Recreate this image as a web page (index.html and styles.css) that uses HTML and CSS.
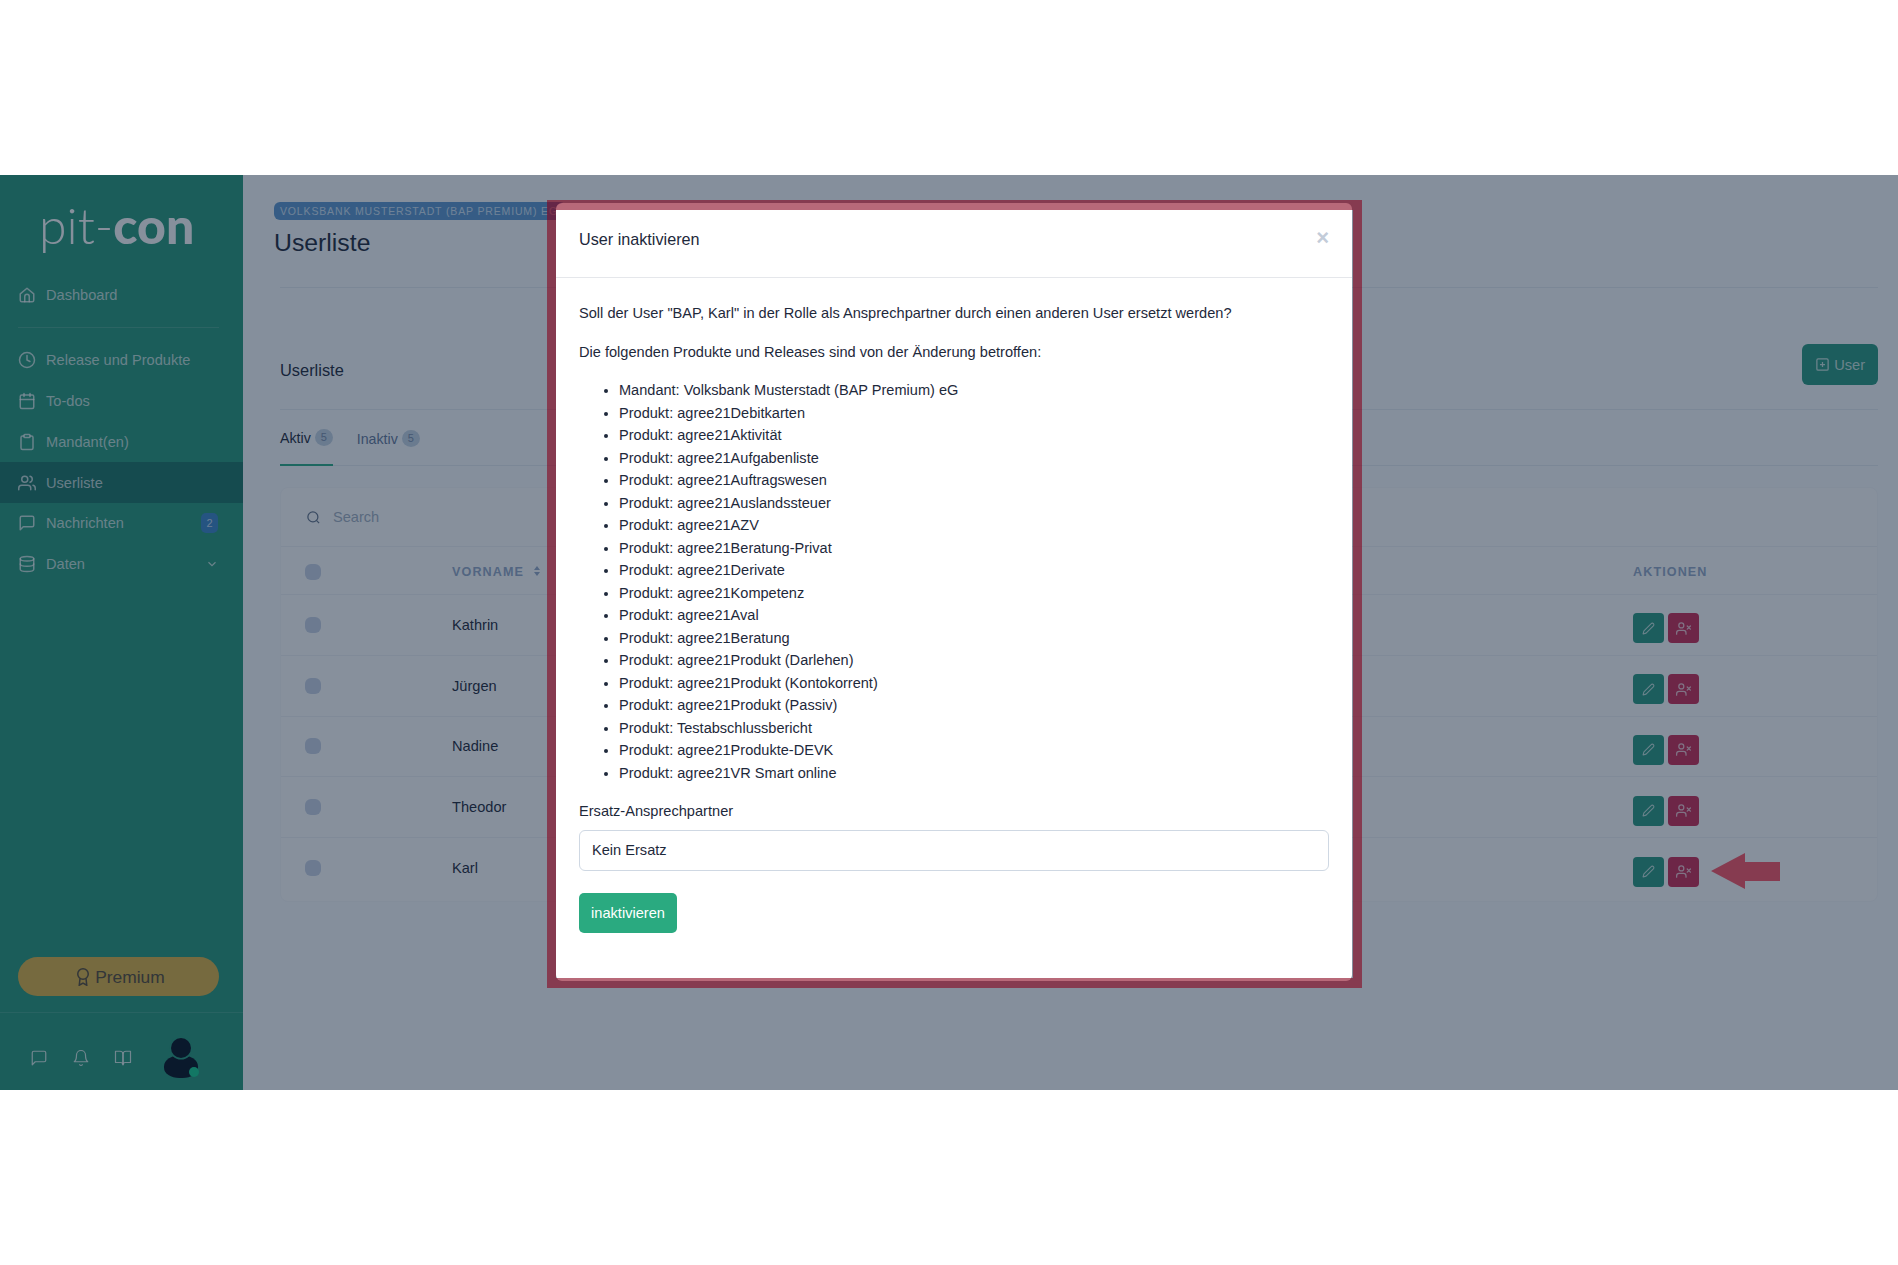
FILE: index.html
```html
<!DOCTYPE html>
<html lang="de">
  <head>
    <meta charset="UTF-8" />
    <meta name="viewport" content="width=device-width, initial-scale=1.0" />
    <title>Userliste</title>
    <link rel="stylesheet" href="styles.css">
  </head>
  <body>
    <svg class="sprite" xmlns="http://www.w3.org/2000/svg">
      <symbol id="i-home" viewBox="0 0 24 24"><path d="M3 10.5 12 3l9 7.5V19a2 2 0 0 1-2 2H5a2 2 0 0 1-2-2z"/><path d="M9 21v-7a3 3 0 0 1 6 0v7"/></symbol>
      <symbol id="i-clock" viewBox="0 0 24 24"><circle cx="12" cy="12" r="10"/><path d="M12 6v6l4 2"/></symbol>
      <symbol id="i-calendar" viewBox="0 0 24 24"><rect x="3" y="4" width="18" height="18" rx="2"/><path d="M16 2v4M8 2v4M3 10h18"/></symbol>
      <symbol id="i-clipboard" viewBox="0 0 24 24"><rect x="8" y="2" width="8" height="4" rx="1"/><path d="M16 4h2a2 2 0 0 1 2 2v14a2 2 0 0 1-2 2H6a2 2 0 0 1-2-2V6a2 2 0 0 1 2-2h2"/></symbol>
      <symbol id="i-users" viewBox="0 0 24 24"><path d="M17 21v-2a4 4 0 0 0-4-4H5a4 4 0 0 0-4 4v2"/><circle cx="9" cy="7" r="4"/><path d="M23 21v-2a4 4 0 0 0-3-3.87M16 3.13a4 4 0 0 1 0 7.75"/></symbol>
      <symbol id="i-message" viewBox="0 0 24 24"><path d="M21 15a2 2 0 0 1-2 2H7l-4 4V5a2 2 0 0 1 2-2h14a2 2 0 0 1 2 2z"/></symbol>
      <symbol id="i-database" viewBox="0 0 24 24"><ellipse cx="12" cy="5" rx="9" ry="3"/><path d="M21 12c0 1.66-4 3-9 3s-9-1.34-9-3"/><path d="M3 5v14c0 1.66 4 3 9 3s9-1.34 9-3V5"/></symbol>
      <symbol id="i-chevron" viewBox="0 0 24 24"><path d="m6 9 6 6 6-6"/></symbol>
      <symbol id="i-award" viewBox="0 0 24 24"><circle cx="12" cy="8" r="7"/><path d="M8 14 7 23l5-3 5 3-1-9"/></symbol>
      <symbol id="i-bell" viewBox="0 0 24 24"><path d="M18 8A6 6 0 0 0 6 8c0 7-3 9-3 9h18s-3-2-3-9"/><path d="M13.73 21a2 2 0 0 1-3.46 0"/></symbol>
      <symbol id="i-book" viewBox="0 0 24 24"><path d="M2 3h6a4 4 0 0 1 4 4v14a3 3 0 0 0-3-3H2z"/><path d="M22 3h-6a4 4 0 0 0-4 4v14a3 3 0 0 1 3-3h7z"/></symbol>
      <symbol id="i-plus" viewBox="0 0 24 24"><rect x="3" y="3" width="18" height="18" rx="2"/><path d="M12 8v8M8 12h8"/></symbol>
      <symbol id="i-pencil" viewBox="0 0 24 24"><path d="M17 3a2.83 2.83 0 1 1 4 4L7.5 20.5 2 22l1.5-5.5z"/></symbol>
      <symbol id="i-userx" viewBox="0 0 24 24"><path d="M16 21v-2a4 4 0 0 0-4-4H5a4 4 0 0 0-4 4v2"/><circle cx="8.5" cy="7" r="4"/><path d="m18 8 5 5M23 8l-5 5"/></symbol>
      <symbol id="i-search" viewBox="0 0 24 24"><circle cx="11" cy="11" r="8"/><path d="m21 21-4.35-4.35"/></symbol>
    </svg>

    <div class="app">
      <aside class="sidebar">
        <div class="logo"><span class="logo-light">pit-</span><span class="logo-bold">con</span></div>
        <a class="nav-item"><svg class="icon"><use href="#i-home"/></svg>Dashboard</a>
        <div class="nav-divider"></div>
        <a class="nav-item"><svg class="icon"><use href="#i-clock"/></svg>Release und Produkte</a>
        <a class="nav-item"><svg class="icon"><use href="#i-calendar"/></svg>To-dos</a>
        <a class="nav-item"><svg class="icon"><use href="#i-clipboard"/></svg>Mandant(en)</a>
        <a class="nav-item active"><svg class="icon"><use href="#i-users"/></svg>Userliste</a>
        <a class="nav-item"><svg class="icon"><use href="#i-message"/></svg>Nachrichten<span class="nav-badge">2</span></a>
        <a class="nav-item"><svg class="icon"><use href="#i-database"/></svg>Daten<svg class="nav-chevron"><use href="#i-chevron"/></svg></a>

        <button class="premium"><svg class="premium-icon"><use href="#i-award"/></svg>Premium</button>

        <div class="side-footer">
          <svg class="foot-icon"><use href="#i-message"/></svg>
          <svg class="foot-icon"><use href="#i-bell"/></svg>
          <svg class="foot-icon"><use href="#i-book"/></svg>
          <div class="avatar">
            <div class="avatar-body"></div>
            <div class="avatar-head"></div>
            <div class="avatar-dot"></div>
          </div>
        </div>
      </aside>

      <main class="main">
        <div class="page-head">
          <span class="chip">Volksbank Musterstadt (BAP Premium) eG</span>
          <h1>Userliste</h1>
        </div>
        <div class="content">
          <div class="list-head">
            <h3>Userliste</h3>
            <button class="btn-add"><svg class="icon-add"><use href="#i-plus"/></svg>User</button>
          </div>
          <div class="tabs">
            <a class="tab active">Aktiv <span class="tab-count">5</span></a>
            <a class="tab">Inaktiv <span class="tab-count">5</span></a>
          </div>
          <div class="card">
            <div class="search-row"><svg class="icon-search"><use href="#i-search"/></svg>Search</div>
            <div class="t-row t-head">
              <span class="check"></span>
              <span class="th">Vorname <svg class="sort" viewBox="0 0 6 10"><path d="M3 0l3 4H0zM3 10 0 6h6z"/></svg></span>
              <span class="th">Aktionen</span>
            </div>
            <div class="t-row">
              <span class="check"></span><span>Kathrin</span>
              <span class="actions"><button class="act green"><svg><use href="#i-pencil"/></svg></button><button class="act red"><svg><use href="#i-userx"/></svg></button></span>
            </div>
            <div class="t-row">
              <span class="check"></span><span>Jürgen</span>
              <span class="actions"><button class="act green"><svg><use href="#i-pencil"/></svg></button><button class="act red"><svg><use href="#i-userx"/></svg></button></span>
            </div>
            <div class="t-row">
              <span class="check"></span><span>Nadine</span>
              <span class="actions"><button class="act green"><svg><use href="#i-pencil"/></svg></button><button class="act red"><svg><use href="#i-userx"/></svg></button></span>
            </div>
            <div class="t-row">
              <span class="check"></span><span>Theodor</span>
              <span class="actions"><button class="act green"><svg><use href="#i-pencil"/></svg></button><button class="act red"><svg><use href="#i-userx"/></svg></button></span>
            </div>
            <div class="t-row">
              <span class="check"></span><span>Karl</span>
              <span class="actions"><button class="act green"><svg><use href="#i-pencil"/></svg></button><button class="act red"><svg><use href="#i-userx"/></svg></button></span>
            </div>
          </div>
        </div>
      </main>

      <div class="backdrop"></div>

      <div class="modal">
        <div class="modal-head">
          <span>User inaktivieren</span>
          <span class="modal-close">×</span>
        </div>
        <div class="modal-body">
          <p>Soll der User "BAP, Karl" in der Rolle als Ansprechpartner durch einen anderen User ersetzt werden?</p>
          <p>Die folgenden Produkte und Releases sind von der Änderung betroffen:</p>
          <ul>
            <li>Mandant: Volksbank Musterstadt (BAP Premium) eG</li>
            <li>Produkt: agree21Debitkarten</li>
            <li>Produkt: agree21Aktivität</li>
            <li>Produkt: agree21Aufgabenliste</li>
            <li>Produkt: agree21Auftragswesen</li>
            <li>Produkt: agree21Auslandssteuer</li>
            <li>Produkt: agree21AZV</li>
            <li>Produkt: agree21Beratung-Privat</li>
            <li>Produkt: agree21Derivate</li>
            <li>Produkt: agree21Kompetenz</li>
            <li>Produkt: agree21Aval</li>
            <li>Produkt: agree21Beratung</li>
            <li>Produkt: agree21Produkt (Darlehen)</li>
            <li>Produkt: agree21Produkt (Kontokorrent)</li>
            <li>Produkt: agree21Produkt (Passiv)</li>
            <li>Produkt: Testabschlussbericht</li>
            <li>Produkt: agree21Produkte-DEVK</li>
            <li>Produkt: agree21VR Smart online</li>
          </ul>
          <label class="field-label">Ersatz-Ansprechpartner</label>
          <div class="select">Kein Ersatz</div>
          <button class="btn-submit">inaktivieren</button>
        </div>
      </div>

      <!-- Markierungen aus der Anleitung -->
      <div class="mark-frame"></div>
      <svg class="mark-arrow" viewBox="0 0 69 36"><path d="M0 18 34 0v9h35v19H34v8z"/></svg>
    </div>
  </body>
</html>
```

FILE: styles.css
```css
* {
  box-sizing: border-box;
}
body {
  margin: 0;
  padding: 175px 0;
  background: #ffffff;
  color: #1e293b;
  font-family: "Liberation Sans", Arial, sans-serif;
  font-size: 14.6px;
}
h1, h3, p, ul {
  margin: 0;
}
button {
  font-family: inherit;
  border: none;
}
.sprite {
  display: none;
}
.app {
  position: relative;
  display: flex;
  height: 915px;
  overflow: hidden;
  background: #fbfdff;
}

/* sidebar */
.sidebar {
  display: flex;
  flex-direction: column;
  flex: none;
  width: 243px;
  background: #26987a;
  color: rgba(255, 255, 255, 0.72);
}
.logo {
  height: 100px;
  padding: 14px 0 0 39px;
  color: #ffffff;
  font-family: Lato, sans-serif;
  font-size: 50px;
  line-height: 72px;
  white-space: nowrap;
}
.logo-light {
  font-weight: 300;
}
.logo-bold {
  font-weight: 900;
}
.nav-item {
  display: flex;
  align-items: center;
  height: 40.8px;
  padding: 0 25px 0 18px;
}
.nav-item.active {
  background: #1a7465;
}
.icon {
  flex: none;
  width: 18px;
  height: 18px;
  margin-right: 10px;
  fill: none;
  stroke: currentColor;
  stroke-width: 2;
  stroke-linecap: round;
  stroke-linejoin: round;
}
.nav-divider {
  height: 1px;
  margin: 11px 24px 12px 18px;
  background: rgba(255, 255, 255, 0.15);
}
.nav-badge {
  margin-left: auto;
  width: 17px;
  height: 20px;
  border-radius: 5px;
  background: #3b86c8;
  font-size: 11px;
  line-height: 20px;
  text-align: center;
}
.nav-chevron {
  margin: 0 -1px 0 auto;
  width: 14px;
  height: 14px;
  fill: none;
  stroke: currentColor;
  stroke-width: 2;
}
.premium {
  display: flex;
  align-items: center;
  justify-content: center;
  flex: none;
  height: 39px;
  margin: auto 24px 16px 18px;
  padding: 1px 0 0 2px;
  border-radius: 20px;
  background: #dcb244;
  color: #554a38;
  font-size: 17.4px;
}
.premium-icon {
  width: 18px;
  height: 18px;
  margin-right: 3px;
  fill: none;
  stroke: currentColor;
  stroke-width: 2;
}
.side-footer {
  display: flex;
  align-items: center;
  flex: none;
  height: 78px;
  padding: 12px 0 0 30px;
  border-top: 1px solid rgba(255, 255, 255, 0.12);
}
.foot-icon {
  width: 18px;
  height: 18px;
  margin-right: 24px;
  fill: none;
  stroke: rgba(255, 255, 255, 0.8);
  stroke-width: 1.6;
  stroke-linecap: round;
  stroke-linejoin: round;
}
.avatar {
  position: relative;
  flex: none;
  width: 34px;
  height: 40px;
  margin-left: 8px;
}
.avatar-head {
  position: absolute;
  top: 0;
  left: 7px;
  width: 20px;
  height: 20px;
  border-radius: 50%;
  background: #05101f;
  box-shadow: 0 0 0 1.5px #26987a;
}
.avatar-body {
  position: absolute;
  left: 0;
  bottom: 0;
  width: 34px;
  height: 23px;
  border-radius: 50% 50% 45% 45%;
  background: #05101f;
}
.avatar-dot {
  position: absolute;
  right: -1px;
  bottom: 1px;
  width: 10px;
  height: 10px;
  border-radius: 50%;
  background: #14cc8f;
}

/* main */
.main {
  flex: 1;
  min-width: 0;
}
.page-head {
  padding: 27px 0 0 31px;
}
.chip {
  display: inline-block;
  height: 18px;
  padding: 0 8px 0 6px;
  border-radius: 6px;
  background: #5d97d0;
  color: #cfe2f5;
  font-size: 10.5px;
  line-height: 18px;
  letter-spacing: 0.85px;
  text-transform: uppercase;
  white-space: nowrap;
}
h1 {
  margin-top: 8px;
  font-size: 24.8px;
  font-weight: 400;
  line-height: 30px;
}
.content {
  margin: 29px 20px 0 37px;
  border-top: 1px solid #e7ecf2;
}
.list-head {
  display: flex;
  justify-content: space-between;
  align-items: flex-start;
  padding: 56px 0 24px;
  border-bottom: 1px solid #e7ecf2;
}
h3 {
  margin-top: 16px;
  font-size: 16.4px;
  font-weight: 400;
  line-height: 20px;
}
.btn-add {
  display: flex;
  align-items: center;
  height: 41px;
  padding: 0 13px;
  border-radius: 6px;
  background: #289880;
  color: rgba(255, 255, 255, 0.75);
  font-size: 14.6px;
}
.icon-add {
  width: 15px;
  height: 15px;
  margin-right: 4px;
  fill: none;
  stroke: currentColor;
  stroke-width: 2;
}
.tabs {
  display: flex;
  gap: 24px;
  border-bottom: 1px solid #e7ecf2;
}
.tab {
  display: flex;
  align-items: center;
  gap: 4px;
  height: 56px;
  margin-bottom: -1px;
  padding-top: 1px;
  color: #64789b;
  font-size: 14.2px;
}
.tab.active {
  border-bottom: 2px solid #2aac86;
  color: #1e293b;
}
.tab-count {
  width: 18px;
  height: 17px;
  border-radius: 50%;
  background: #c5d4e4;
  color: #7a8dab;
  font-size: 11px;
  line-height: 17px;
  text-align: center;
}
.card {
  margin-top: 21px;
  padding-bottom: 2px;
  border: 1px solid #f6f8fb;
  border-radius: 8px;
  background: #ffffff;
}
.search-row {
  display: flex;
  align-items: center;
  height: 59px;
  padding-left: 25px;
  border-bottom: 1px solid #f0f3f7;
  color: #a3b0c2;
}
.icon-search {
  width: 15px;
  height: 15px;
  margin-right: 12px;
  fill: none;
  stroke: #64748b;
  stroke-width: 2;
}
.t-row {
  display: grid;
  grid-template-columns: 147px 1fr 244px;
  align-items: center;
  height: 60.75px;
  padding-left: 24px;
  border-bottom: 1px solid #f0f3f7;
}
.t-row:last-child {
  border-bottom: none;
}
.t-row.t-head {
  height: 48px;
  padding-top: 2px;
}
.check {
  width: 16px;
  height: 16px;
  border-radius: 6px;
  background: #c8d3e6;
}
.th {
  color: #94a9c8;
  font-size: 12.6px;
  font-weight: 700;
  letter-spacing: 1.1px;
  text-transform: uppercase;
}
.sort {
  width: 6px;
  height: 10px;
  margin-left: 5px;
  fill: #94a9c8;
}
.actions {
  display: flex;
  gap: 4px;
  margin-top: 7px;
}
.act {
  display: flex;
  align-items: center;
  justify-content: center;
  width: 31px;
  height: 30px;
  padding: 0;
  border-radius: 4px;
}
.act svg {
  width: 13px;
  height: 13px;
  fill: none;
  stroke: rgba(255, 255, 255, 0.72);
  stroke-width: 2;
  stroke-linecap: round;
  stroke-linejoin: round;
}
.act.red svg {
  width: 15px;
  height: 15px;
}
.act.green {
  background: #289880;
}
.act.red {
  background: #ca2a55;
}

/* modal */
.backdrop {
  position: absolute;
  inset: 0;
  background: rgba(15, 33, 57, 0.5);
}
.modal {
  position: absolute;
  top: 28px;
  left: 556px;
  width: 796px;
  border-radius: 6px;
  background: #ffffff;
}
.modal-head {
  display: flex;
  justify-content: space-between;
  align-items: center;
  height: 75px;
  padding: 0 23px 2px;
  border-bottom: 1px solid #e5e7eb;
  font-size: 16.2px;
}
.modal-close {
  margin-top: -3px;
  color: #c3ccd9;
  font-size: 22px;
  font-weight: 700;
  line-height: 1;
}
.modal-body {
  padding: 24px 23px 48px;
  line-height: 22.5px;
}
.modal-body p {
  margin-bottom: 16px;
}
.modal-body ul {
  padding-left: 40px;
  margin-bottom: 16px;
  font-size: 14.55px;
}
.field-label {
  display: block;
  margin-bottom: 7px;
}
.select {
  height: 41px;
  padding-left: 12px;
  border: 1px solid #cfd8e3;
  border-radius: 6px;
  line-height: 39px;
}
.btn-submit {
  display: block;
  width: 98px;
  height: 40px;
  margin-top: 22px;
  border-radius: 5px;
  background: #2aaa80;
  color: #ffffff;
  font-size: 14.6px;
}
.mark-frame {
  position: absolute;
  top: 25px;
  left: 547px;
  width: 815px;
  height: 788px;
  border-style: solid;
  border-width: 10px 9px;
  border-color: rgba(135, 0, 27, 0.59);
}
.mark-arrow {
  position: absolute;
  top: 678px;
  left: 1711px;
  width: 69px;
  height: 36px;
  fill: rgba(135, 0, 27, 0.59);
}
```
